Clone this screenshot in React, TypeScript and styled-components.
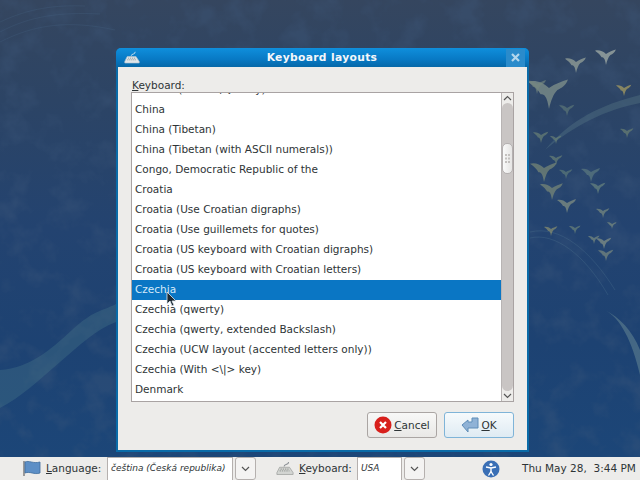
import styled, { createGlobalStyle } from 'styled-components';

const rows = [
    'Canada (Dvorak/Qwerty)',
    'China',
    'China (Tibetan)',
    'China (Tibetan (with ASCII numerals))',
    'Congo, Democratic Republic of the',
    'Croatia',
    'Croatia (Use Croatian digraphs)',
    'Croatia (Use guillemets for quotes)',
    'Croatia (US keyboard with Croatian digraphs)',
    'Croatia (US keyboard with Croatian letters)',
    'Czechia',
    'Czechia (qwerty)',
    'Czechia (qwerty, extended Backslash)',
    'Czechia (UCW layout (accented letters only))',
    'Czechia (With <\\|> key)',
    'Denmark',
];

// x, y, scale, colour
const birds: [number, number, number, string][] = [
    [549, 88, 2.1, '#8d9c90'],
    [576, 62, 1.1, '#a3aea0'],
    [606, 54, 1.1, '#b4bdb0'],
    [624, 88, 0.8, '#b7a860'],
    [627, 131, 0.7, '#6f8472'],
    [537, 84, 1.0, '#77897f'],
    [567, 108, 0.8, '#5f7a78'],
    [541, 135, 0.8, '#6f8577'],
    [556, 138, 0.6, '#6f8577'],
    [556, 158, 0.7, '#6f8577'],
    [544, 168, 1.4, '#7f8f78'],
    [552, 188, 1.2, '#7f8f78'],
    [566, 172, 0.7, '#607d7a'],
    [591, 172, 1.0, '#5f7d80'],
    [598, 186, 0.8, '#6f8a80'],
    [567, 203, 1.0, '#8d9a85'],
    [603, 211, 0.7, '#7f9080'],
    [551, 229, 0.7, '#93966f'],
    [575, 228, 0.6, '#70887a'],
    [594, 238, 0.6, '#7f9080'],
    [604, 241, 0.8, '#8f9a88'],
    [606, 253, 0.8, '#7f8f80'],
    [612, 224, 0.5, '#7f9080'],
];

const GlobalStyle = createGlobalStyle`
    html, body {
        margin: 0;
        padding: 0;
        width: 640px;
        height: 480px;
        overflow: hidden;
    }
    * {
        box-sizing: border-box;
    }
`;

const Screen = styled.div`
    width: 640px;
    height: 480px;
    display: flex;
    flex-direction: column;
    font-family: "DejaVu Sans", sans-serif;
    font-size: 10.5px;
    color: #2e3436;
`;

const Desktop = styled.div`
    position: relative;
    flex: 1;
    padding: 48px 0 0 116px;
    overflow: hidden;
    background: linear-gradient(180deg, #35465f 0%, #2c4465 22%, #234370 50%, #1d4272 75%, #1c4678 100%);
`;

const Wallpaper = styled.svg`
    position: absolute;
    top: 0;
    left: 0;
`;

const Dialog = styled.div`
    position: relative;
    width: 413px;
    height: 404px;
    display: flex;
    flex-direction: column;
    background: #0a6ba8;
    border-radius: 5px 5px 0 0;
    padding: 0 2px 2px;
`;

const TitleBar = styled.div`
    height: 19px;
    margin: 0 -2px;
    flex-shrink: 0;
    display: flex;
    align-items: center;
    padding: 0 4px 0 8px;
    border-radius: 5px 5px 0 0;
    background: linear-gradient(180deg, #0f8fdc 0%, #0879c4 60%, #0668a8 100%);
`;

const Title = styled.div`
    flex: 1;
    text-align: center;
    font-weight: bold;
    font-size: 10.7px;
    letter-spacing: 0.35px;
    color: #f4f7fa;
    margin-left: -2px;
`;

const CloseButton = styled.div`
    width: 19px;
    height: 18px;
    display: flex;
    align-items: center;
    justify-content: center;
    background: #2a8bcb;
`;

const Body = styled.div`
    flex: 1;
    display: flex;
    flex-direction: column;
    background: #edecea;
    padding: 10px 13px 11px 13px;
`;

const FieldLabel = styled.div`
    height: 15px;
    line-height: 16px;
    padding-left: 1px;
`;

const Mnemonic = styled.span`
    text-decoration: underline;
`;

const ListFrame = styled.div`
    height: 310px;
    display: flex;
    border: 1px solid #a9a3a3;
    background: #fff;
`;

const ListClip = styled.div`
    flex: 1;
    overflow: hidden;
    display: flex;
    flex-direction: column;
`;

const Row = styled.div<{ selected?: boolean }>`
    height: 20px;
    flex-shrink: 0;
    line-height: 18px;
    padding-left: 3px;
    white-space: nowrap;
    color: ${({ selected }) => (selected ? '#d5eafa' : '#2e3436')};
    background: ${({ selected }) => (selected ? '#0a76c4' : 'transparent')};
    &:first-child {
        margin-top: -13px;
    }
`;

const Scrollbar = styled.div`
    width: 12px;
    display: flex;
    flex-direction: column;
    align-items: stretch;
    background: #edecea;
    border-left: 1px solid #b8b4b4;
`;

const ScrollArrow = styled.div`
    height: 10px;
    display: flex;
    align-items: center;
    justify-content: center;
    flex-shrink: 0;
`;

const Trough = styled.div`
    flex: 1;
    border-radius: 6px;
    background: #c9c5c4;
    padding-top: 40px;
`;

const Thumb = styled.div`
    height: 31px;
    border: 1px solid #b5b1b1;
    border-radius: 5px;
    background: linear-gradient(90deg, #fafafa, #e6e5e4);
    display: flex;
    align-items: center;
    justify-content: center;
`;

const Buttons = styled.div`
    display: flex;
    justify-content: flex-end;
    gap: 7px;
    margin-top: 10px;
`;

const DialogButton = styled.div<{ focused?: boolean }>`
    width: 70px;
    height: 26px;
    display: flex;
    align-items: center;
    justify-content: center;
    gap: 2px;
    border: 1px solid ${({ focused }) => (focused ? '#7fb4d8' : '#aaa5a3')};
    border-radius: 3px;
    background: ${({ focused }) =>
        focused ? 'linear-gradient(180deg, #f6fafc, #dfebf3)' : 'linear-gradient(180deg, #f8f8f7, #e9e8e6)'};
`;

const Panel = styled.div`
    height: 23px;
    flex-shrink: 0;
    display: flex;
    align-items: center;
    background: #edecea;
    padding-left: 23px;
`;

const PanelLabel = styled.div<{ w: number }>`
    width: ${({ w }) => w}px;
    padding: 0 0 2px 5px;
    white-space: nowrap;
`;

const Combo = styled.div<{ w: number }>`
    width: ${({ w }) => w}px;
    height: 23px;
    line-height: 21px;
    padding-left: 3px;
    font-size: 9px;
    font-style: italic;
    background: #fff;
    border: 1px solid #b5b0ae;
    border-bottom: 0;
    white-space: nowrap;
`;

const ComboArrow = styled.div`
    width: 21px;
    height: 23px;
    margin-left: 2px;
    display: flex;
    align-items: center;
    justify-content: center;
    border: 1px solid #b5b0ae;
    border-radius: 3px;
    background: #f4f3f2;
`;

const PanelGap = styled.div<{ w: number }>`
    width: ${({ w }) => w}px;
    flex-shrink: 0;
`;

const Clock = styled.div`
    padding-bottom: 2px;
    white-space: pre;
`;

const Cursor = styled.svg`
    position: absolute;
    left: 50px;
    top: 243px;
`;

const Chevron = () => (
    <svg width="9" height="6" viewBox="0 0 9 6">
        <path d="M1 1l3.5 3.5L8 1" fill="none" stroke="#555" strokeWidth="1.2" />
    </svg>
);

const KeyboardIcon = ({ size, light }: { size: number; light?: boolean }) => (
    <svg width={size} height={size * 0.8} viewBox="0 0 20 16">
        <path d="M9 6c0-3 5-1 5-5" fill="none" stroke={light ? '#c4dcec' : '#8a8f94'} strokeWidth="1.2" />
        <path d="M4 7h11l4 6v2H1v-2z" fill={light ? '#dfe6ea' : '#d3d5d2'} stroke={light ? '#b5c5cf' : '#9a9d9a'} strokeWidth="0.8" />
        <path d="M5 9h9M4 11h11" stroke="#8a8d8a" strokeWidth="1" strokeDasharray="1.5 1" />
    </svg>
);

export default function App() {
    return (
        <Screen>
            <GlobalStyle />
            <Desktop>
                <Wallpaper width="640" height="457" viewBox="0 0 640 457">
                    <defs>
                        <filter id="grain">
                            <feTurbulence type="fractalNoise" baseFrequency="0.035" numOctaves="4" seed="7" />
                            <feColorMatrix values="0 0 0 0 0.05  0 0 0 0 0.1  0 0 0 0 0.2  3 0 0 0 -1.4" />
                        </filter>
                        <filter id="soft">
                            <feGaussianBlur stdDeviation="0.5" />
                        </filter>
                    </defs>
                    <rect width="640" height="457" filter="url(#grain)" opacity="0.35" />
                    {/* teal ribbon left of the dialog */}
                    <path d="M0 370C30 368 50 350 72 330S100 312 116 304V322C95 330 80 345 60 362S20 398 0 408z" fill="#4f8290" opacity="0.3" />
                    {/* ribbons right of the dialog */}
                    <path d="M545 150C570 120 600 105 640 95V103C605 110 575 125 545 150z" fill="#6f9598" opacity="0.25" />
                    <path d="M605 310C620 318 632 340 640 375V350C632 330 620 318 605 310z" fill="#7fa0a0" opacity="0.4" />
                    <path d="M530 232C560 225 590 250 615 290M530 238C555 232 585 255 608 295" fill="none" stroke="#5f8299" strokeWidth="0.6" opacity="0.4" />
                    <g fill="none" stroke="#4f6f8f" strokeWidth="0.6" opacity="0.35">
                        <path d="M0 22C30 8 55 5 85 6M0 32C30 16 60 12 100 14M0 42C35 24 70 20 115 30" />
                    </g>
                    <g filter="url(#soft)">
                        {birds.map(([x, y, s, c], i) => (
                            <path
                                key={i}
                                transform={`translate(${x} ${y}) scale(${s})`}
                                d="M0 0C-3-3-7-4-10-3-7-1-5 1-4 3-2 3-1 4 0 10 1 6 2 3 4 1 6 0 8-1 9-4 6-3 3-2 0 0z"
                                fill={c}
                                opacity="0.65"
                            />
                        ))}
                    </g>
                </Wallpaper>
                <Dialog>
                    <TitleBar>
                        <KeyboardIcon size={16} light />
                        <Title>Keyboard layouts</Title>
                        <CloseButton>
                            <svg width="9" height="9" viewBox="0 0 9 9">
                                <path d="M1 1l7 7M8 1l-7 7" stroke="#b3d6ec" strokeWidth="2.2" />
                            </svg>
                        </CloseButton>
                    </TitleBar>
                    <Body>
                        <FieldLabel><Mnemonic>K</Mnemonic>eyboard:</FieldLabel>
                        <ListFrame>
                            <ListClip>
                                {rows.map((r) => (
                                    <Row key={r} selected={r === 'Czechia'}>{r}</Row>
                                ))}
                            </ListClip>
                            <Scrollbar>
                                <ScrollArrow>
                                    <svg width="9" height="6" viewBox="0 0 9 6">
                                        <path d="M1 5l3.5-3.5L8 5" fill="none" stroke="#555" strokeWidth="1.2" />
                                    </svg>
                                </ScrollArrow>
                                <Trough>
                                    <Thumb>
                                        <svg width="5" height="9" viewBox="0 0 5 9" fill="#c4c1bf">
                                            <rect x="0" y="0" width="2" height="2" /><rect x="3" y="0" width="2" height="2" />
                                            <rect x="0" y="3.5" width="2" height="2" /><rect x="3" y="3.5" width="2" height="2" />
                                            <rect x="0" y="7" width="2" height="2" /><rect x="3" y="7" width="2" height="2" />
                                        </svg>
                                    </Thumb>
                                </Trough>
                                <ScrollArrow><Chevron /></ScrollArrow>
                            </Scrollbar>
                        </ListFrame>
                        <Buttons>
                            <DialogButton>
                                <svg width="18" height="18" viewBox="0 0 18 18">
                                    <circle cx="9" cy="9" r="8.5" fill="#d8201c" />
                                    <path d="M6 6l6 6M12 6l-6 6" stroke="#fff" strokeWidth="2.2" />
                                </svg>
                                <span><Mnemonic>C</Mnemonic>ancel</span>
                            </DialogButton>
                            <DialogButton focused>
                                <svg width="18" height="16" viewBox="0 0 18 16">
                                    <path d="M7 3v2h4V1h6v10H7v4L1 8z" fill="#8fb2d6" stroke="#5f8db8" strokeWidth="1" strokeLinejoin="round" />
                                </svg>
                                <span><Mnemonic>O</Mnemonic>K</span>
                            </DialogButton>
                        </Buttons>
                    </Body>
                    <Cursor width="12" height="17" viewBox="0 0 12 17">
                        <path d="M1 1v12l3-3 2 5 2-1-2-4h4z" fill="#1d2a33" stroke="#dfe8ef" strokeWidth="0.8" />
                    </Cursor>
                </Dialog>
            </Desktop>
            <Panel>
                <svg width="18" height="17" viewBox="0 0 18 17">
                    <path d="M1 1v15" stroke="#777" strokeWidth="1.4" />
                    <path d="M2 2c4-2 8 2 15 0v11c-6 2-10-2-15 0z" fill="#5d8fc6" stroke="#3f6d9e" strokeWidth="0.8" />
                </svg>
                <PanelLabel w={66}><Mnemonic>L</Mnemonic>anguage:</PanelLabel>
                <Combo w={126}>čeština (Česká republika)</Combo>
                <ComboArrow><Chevron /></ComboArrow>
                <PanelGap w={20} />
                <KeyboardIcon size={18} />
                <PanelLabel w={63}><Mnemonic>K</Mnemonic>eyboard:</PanelLabel>
                <Combo w={45}>USA</Combo>
                <ComboArrow><Chevron /></ComboArrow>
                <PanelGap w={57} />
                <svg width="18" height="18" viewBox="0 0 18 18">
                    <circle cx="9" cy="9" r="8.5" fill="#3a6fb5" />
                    <circle cx="9" cy="4.5" r="1.6" fill="#fff" />
                    <path d="M4 7l5 1 5-1M9 8v3.5M9 11.5l-2.5 4M9 11.5l2.5 4" fill="none" stroke="#fff" strokeWidth="1.4" />
                </svg>
                <PanelGap w={22} />
                <Clock>Thu May 28,  3:44 PM</Clock>
            </Panel>
        </Screen>
    );
}
